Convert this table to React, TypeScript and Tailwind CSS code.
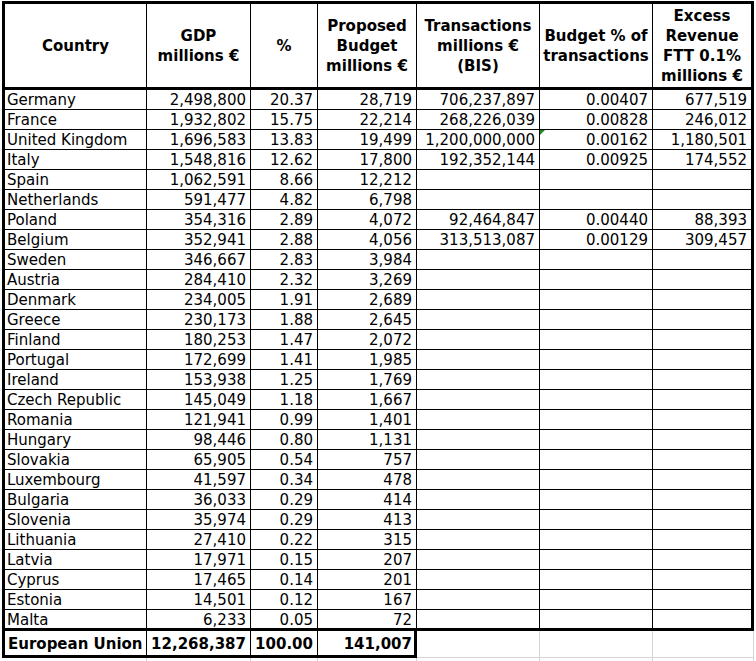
import React from 'react';

type Row = [string, string, string, string, string?, string?, string?];

const rows: Row[] = [
  ['Germany', '2,498,800', '20.37', '28,719', '706,237,897', '0.00407', '677,519'],
  ['France', '1,932,802', '15.75', '22,214', '268,226,039', '0.00828', '246,012'],
  ['United Kingdom', '1,696,583', '13.83', '19,499', '1,200,000,000', '0.00162', '1,180,501'],
  ['Italy', '1,548,816', '12.62', '17,800', '192,352,144', '0.00925', '174,552'],
  ['Spain', '1,062,591', '8.66', '12,212'],
  ['Netherlands', '591,477', '4.82', '6,798'],
  ['Poland', '354,316', '2.89', '4,072', '92,464,847', '0.00440', '88,393'],
  ['Belgium', '352,941', '2.88', '4,056', '313,513,087', '0.00129', '309,457'],
  ['Sweden', '346,667', '2.83', '3,984'],
  ['Austria', '284,410', '2.32', '3,269'],
  ['Denmark', '234,005', '1.91', '2,689'],
  ['Greece', '230,173', '1.88', '2,645'],
  ['Finland', '180,253', '1.47', '2,072'],
  ['Portugal', '172,699', '1.41', '1,985'],
  ['Ireland', '153,938', '1.25', '1,769'],
  ['Czech Republic', '145,049', '1.18', '1,667'],
  ['Romania', '121,941', '0.99', '1,401'],
  ['Hungary', '98,446', '0.80', '1,131'],
  ['Slovakia', '65,905', '0.54', '757'],
  ['Luxembourg', '41,597', '0.34', '478'],
  ['Bulgaria', '36,033', '0.29', '414'],
  ['Slovenia', '35,974', '0.29', '413'],
  ['Lithuania', '27,410', '0.22', '315'],
  ['Latvia', '17,971', '0.15', '207'],
  ['Cyprus', '17,465', '0.14', '201'],
  ['Estonia', '14,501', '0.12', '167'],
  ['Malta', '6,233', '0.05', '72'],
];

const headers = [
  ['Country'],
  ['GDP', 'millions €'],
  ['%'],
  ['Proposed', 'Budget', 'millions €'],
  ['Transactions', 'millions €', '(BIS)'],
  ['Budget % of', 'transactions'],
  ['Excess', 'Revenue', 'FTT 0.1%', 'millions €'],
];

const App = () => {
  return (
    <div
      className="w-[756px] h-[661px] overflow-hidden bg-white text-black text-[15px] leading-[17px]"
      style={{ fontFamily: '"DejaVu Sans", Verdana, sans-serif' }}
    >
      <div className="mt-[1px] ml-[2px] w-[752px] border-t-[3px] border-x-[3px] border-black">
        <div className="grid grid-cols-[142px_104px_67px_99px_123px_113px_98px]">
          {headers.map((lines, i) => (
            <div
              key={i}
              className={`h-[86px] flex flex-col items-center justify-center border-b-[3px] border-black font-bold leading-[20px] text-center ${
                i < 6 ? 'border-r' : ''
              }`}
            >
              {lines.map((l) => (
                <span key={l} className="whitespace-nowrap">{l}</span>
              ))}
            </div>
          ))}

          {rows.map((row, r) => {
            const last = r === rows.length - 1;
            return [0, 1, 2, 3, 4, 5, 6].map((c) => (
              <div
                key={`${r}-${c}`}
                className={`relative flex items-start pt-[2px] whitespace-nowrap border-black ${
                  last ? 'h-[21px] border-b-[3px]' : 'h-[20px] border-b'
                } ${c < 6 ? 'border-r' : ''} ${c === 0 ? 'pl-[2px]' : 'justify-end pr-[4px]'}`}
              >
                {row[c] ?? ''}
                {r === 2 && c === 5 && (
                  <span className="absolute left-0 top-0 w-0 h-0 border-t-[5px] border-r-[5px] border-t-[#1f8a1f] border-r-transparent" />
                )}
              </div>
            ));
          })}
        </div>
      </div>

      <div className="flex">
        <div className="ml-[2px] h-[27px] flex border-x-[3px] border-b-[3px] border-black font-bold">
          <div className="w-[142px] border-r border-black flex items-start pt-[5px] pl-[3px] whitespace-nowrap">European Union</div>
          <div className="w-[104px] border-r border-black flex items-start pt-[5px] justify-end pr-[4px]">12,268,387</div>
          <div className="w-[67px] border-r border-black flex items-start pt-[5px] justify-end pr-[4px]">100.00</div>
          <div className="w-[96px] flex items-start pt-[5px] justify-end pr-[2px]">141,007</div>
        </div>
        <div className="w-[123px] h-[27px] border-r border-b border-[#d4d4d4]" />
        <div className="w-[113px] h-[27px] border-r border-b border-[#d4d4d4]" />
        <div className="w-[101px] h-[27px] border-r border-b border-[#d4d4d4]" />
      </div>

      <div className="flex h-[4px]">
        <div className="w-[147px] border-r border-[#d4d4d4]" />
        <div className="w-[104px] border-r border-[#d4d4d4]" />
        <div className="w-[67px] border-r border-[#d4d4d4]" />
        <div className="w-[99px] border-r border-[#d4d4d4]" />
        <div className="w-[123px] border-r border-[#d4d4d4]" />
        <div className="w-[113px] border-r border-[#d4d4d4]" />
        <div className="w-[101px] border-r border-[#d4d4d4]" />
      </div>
    </div>
  );
};

export default App;
